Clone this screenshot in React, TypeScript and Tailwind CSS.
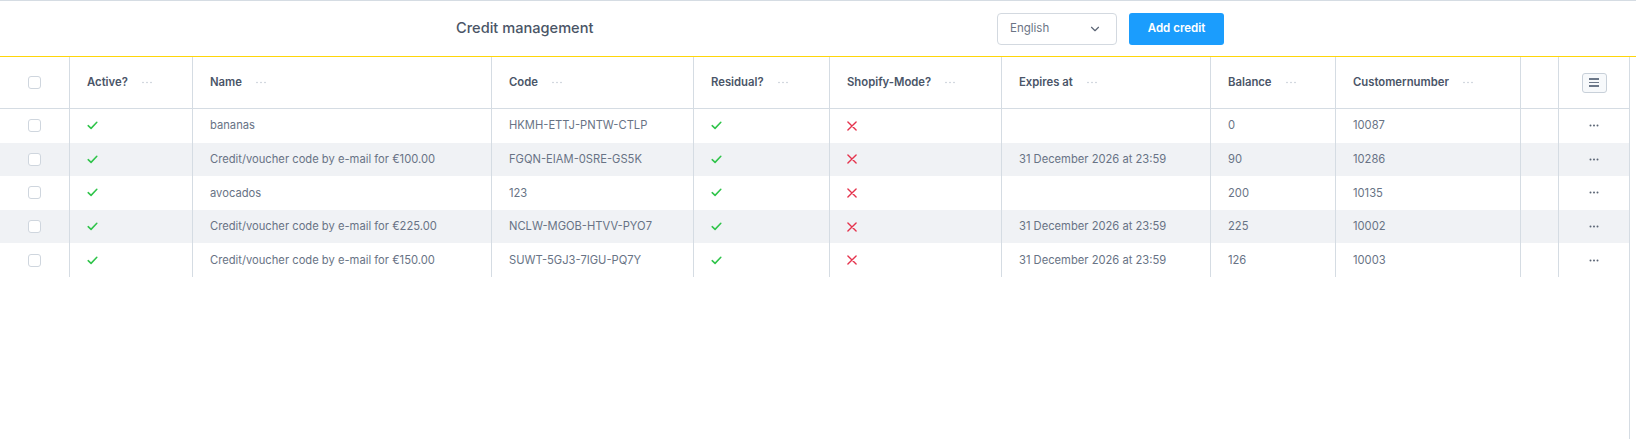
import React from 'react';
import { ChevronDown } from 'lucide-react';

interface Credit {
    id: number;
    name: string;
    code: string;
    expires: string;
    balance: number;
    customer: string;
}

const credits: Credit[] = [
    { id: 1, name: 'bananas', code: 'HKMH-ETTJ-PNTW-CTLP', expires: '', balance: 0, customer: '10087' },
    { id: 2, name: 'Credit/voucher code by e-mail for €100.00', code: 'FGQN-EIAM-0SRE-GS5K', expires: '31 December 2026 at 23:59', balance: 90, customer: '10286' },
    { id: 3, name: 'avocados', code: '123', expires: '', balance: 200, customer: '10135' },
    { id: 4, name: 'Credit/voucher code by e-mail for €225.00', code: 'NCLW-MGOB-HTVV-PYO7', expires: '31 December 2026 at 23:59', balance: 225, customer: '10002' },
    { id: 5, name: 'Credit/voucher code by e-mail for €150.00', code: 'SUWT-5GJ3-7IGU-PQ7Y', expires: '31 December 2026 at 23:59', balance: 126, customer: '10003' },
];

const columns = ['Active?', 'Name', 'Code', 'Residual?', 'Shopify-Mode?', 'Expires at', 'Balance', 'Customernumber'];

const gridCols = 'grid grid-cols-[69px_123px_299px_202px_136px_172px_209px_125px_185px_38px_71px]';
const cell = 'border-l border-[#d5dce3] flex items-center px-[17px]';

const Checkbox = () => (
    <span className="block w-[13px] h-[13px] rounded-[3px] border border-[#cfd6de] bg-white" />
);

const Check = () => (
    <svg width="11" height="9" viewBox="0 0 12 10" fill="none">
        <path d="M1.2 5.2 L4.4 8.2 L10.8 1.4" stroke="#2fc44a" strokeWidth="1.7" strokeLinecap="round" strokeLinejoin="round" />
    </svg>
);

const Cross = () => (
    <svg width="10" height="10" viewBox="0 0 11 11" fill="none">
        <path d="M1 1 L10 10 M10 1 L1 10" stroke="#e5334d" strokeWidth="1.5" strokeLinecap="round" />
    </svg>
);

const HeadDots = () => (
    <svg width="10" height="3" viewBox="0 0 10 3" className="ml-[14px]">
        <circle cx="1" cy="1.5" r="0.8" fill="#c3cad3" />
        <circle cx="5" cy="1.5" r="0.8" fill="#c3cad3" />
        <circle cx="9" cy="1.5" r="0.8" fill="#c3cad3" />
    </svg>
);

const RowDots = () => (
    <svg width="10" height="3" viewBox="0 0 10 3">
        <circle cx="1.5" cy="1.5" r="1" fill="#5b6575" />
        <circle cx="5" cy="1.5" r="1" fill="#5b6575" />
        <circle cx="8.5" cy="1.5" r="1" fill="#5b6575" />
    </svg>
);

const CreditManagement: React.FC = () => {
    return (
        <div className="min-h-screen flex flex-col bg-white font-['Inter',sans-serif]">
            {/* top bar */}
            <header className="h-[57px] border-t border-b border-t-[#d5dce3] border-b-[#ffd60a] flex items-center">
                <h1 className="ml-[456px] w-[137px] whitespace-nowrap text-[14.6px] font-medium text-[#4a5566]">Credit management</h1>
                <div className="ml-[404px] w-[120px] h-[32px] border border-[#d3d9e0] rounded-[4px] flex items-center justify-between pl-3 pr-[14px] text-[11.5px] text-[#6b7485]">
                    <span>English</span>
                    <ChevronDown size={14} strokeWidth={2} className="text-[#5b6575]" />
                </div>
                <button className="ml-3 w-[95px] h-[32px] rounded-[3px] bg-[#1b9dfd] text-white text-[11.5px] font-semibold">
                    Add credit
                </button>
            </header>

            <div className="w-[1630px] flex-1 border-r border-[#d5dce3]">
                {/* table head */}
                <div className={`${gridCols} h-[52px] border-b border-[#d5dce3]`}>
                    <div className="flex items-center justify-center">
                        <Checkbox />
                    </div>
                    {columns.map(col => (
                        <div key={col} className={`${cell} text-[11.3px] font-semibold text-[#4a5568]`}>
                            <span>{col}</span>
                            <HeadDots />
                        </div>
                    ))}
                    <div className="border-l border-[#d5dce3]" />
                    <div className="border-l border-[#d5dce3] flex items-center justify-center">
                        <span className="w-[25px] h-[20px] rounded-[3px] border border-[#c8d0d9] bg-[#f7f9fb] flex flex-col items-center justify-center gap-[2px]">
                            <span className="block w-[10px] h-[1.5px] bg-[#6b7788]" />
                            <span className="block w-[10px] h-[1.5px] bg-[#6b7788]" />
                            <span className="block w-[10px] h-[1.5px] bg-[#6b7788]" />
                        </span>
                    </div>
                </div>

                {/* rows */}
                {credits.map((c, i) => (
                    <div key={c.id} className={`${gridCols} h-[33.6px] text-[11.2px] text-[#687385] ${i % 2 === 1 ? 'bg-[#f0f2f5]' : 'bg-white'}`}>
                        <div className="flex items-center justify-center">
                            <Checkbox />
                        </div>
                        <div className={cell}><Check /></div>
                        <div className={cell}>{c.name}</div>
                        <div className={cell}>{c.code}</div>
                        <div className={cell}><Check /></div>
                        <div className={cell}><Cross /></div>
                        <div className={cell}>{c.expires}</div>
                        <div className={cell}>{c.balance}</div>
                        <div className={cell}>{c.customer}</div>
                        <div className="border-l border-[#d5dce3]" />
                        <div className="border-l border-[#d5dce3] flex items-center justify-center">
                            <RowDots />
                        </div>
                    </div>
                ))}
            </div>
        </div>
    );
};

export default CreditManagement;
